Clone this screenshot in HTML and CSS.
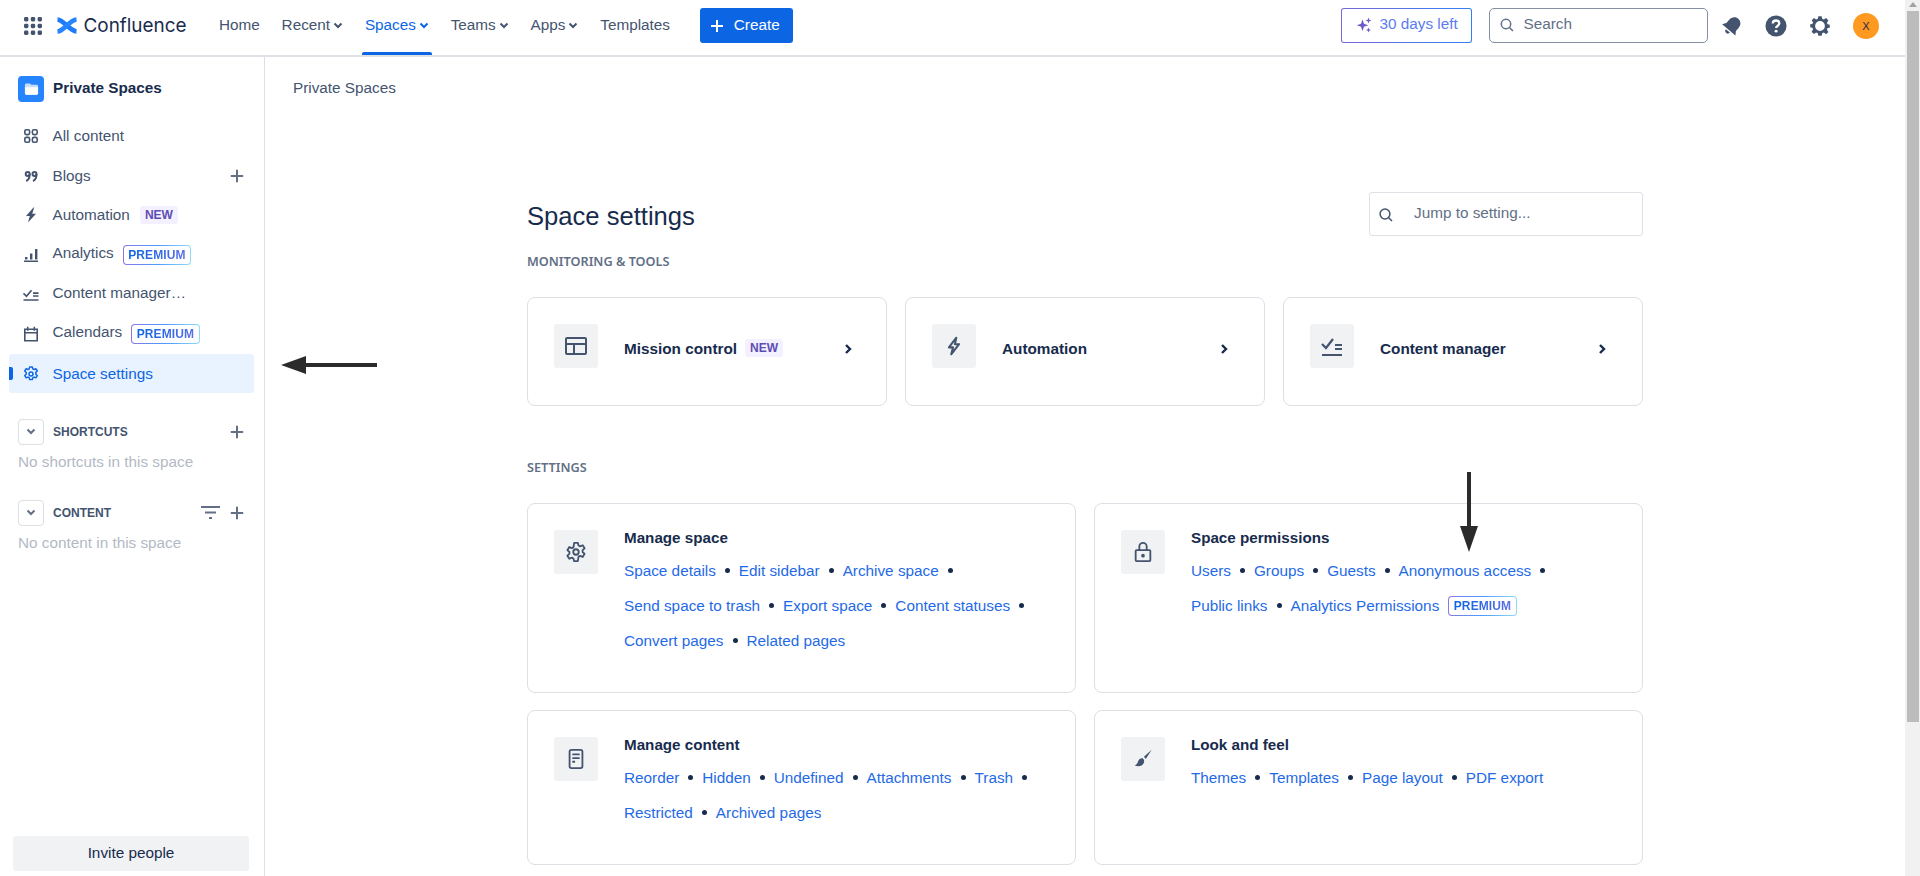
FILE: index.html
```html
<!DOCTYPE html>
<html lang="en">
<head>
<meta charset="utf-8">
<title>Space settings - Confluence</title>
<link rel="stylesheet" href="styles.css">
</head>
<body>
<div class="window">
  <div class="page">
    <header class="topbar">
      <div class="top-left">
        <svg class="apps" viewBox="0 0 18 18"><g fill="#44546f"><rect x="0" y="0" width="4.4" height="4.4" rx="1.4"/><rect x="6.8" y="0" width="4.4" height="4.4" rx="1.4"/><rect x="13.6" y="0" width="4.4" height="4.4" rx="1.4"/><rect x="0" y="6.8" width="4.4" height="4.4" rx="1.4"/><rect x="6.8" y="6.8" width="4.4" height="4.4" rx="1.4"/><rect x="13.6" y="6.8" width="4.4" height="4.4" rx="1.4"/><rect x="0" y="13.6" width="4.4" height="4.4" rx="1.4"/><rect x="6.8" y="13.6" width="4.4" height="4.4" rx="1.4"/><rect x="13.6" y="13.6" width="4.4" height="4.4" rx="1.4"/></g></svg>
        <div class="brand">
          <svg class="brand-mark" viewBox="0 0 20 17"><g fill="none" stroke-width="4.700"><path stroke="#1d7afc" d="M.5 2.500C7 3 12.500 14 19.500 14.500"/><path stroke="#2684ff" d="M19.500 2.500C12.500 3 7 14 .5 14.500"/></g></svg>
          <span class="brand-name">Confluence</span>
        </div>
        <nav class="topnav">
          <a class="topnav-item">Home</a>
          <a class="topnav-item">Recent<svg class="caret" viewBox="0 0 10 7"><path d="M1.500 1.500 5 5l3.500-3.500"/></svg></a>
          <a class="topnav-item is-current">Spaces<svg class="caret" viewBox="0 0 10 7"><path d="M1.500 1.500 5 5l3.500-3.500"/></svg></a>
          <a class="topnav-item">Teams<svg class="caret" viewBox="0 0 10 7"><path d="M1.500 1.500 5 5l3.500-3.500"/></svg></a>
          <a class="topnav-item">Apps<svg class="caret" viewBox="0 0 10 7"><path d="M1.500 1.500 5 5l3.500-3.500"/></svg></a>
          <a class="topnav-item">Templates</a>
        </nav>
        <button class="create"><svg class="create-plus" viewBox="0 0 14 14"><path d="M7 1v12M1 7h12"/></svg>Create</button>
      </div>
      <div class="top-right">
        <button class="trial"><svg class="trial-icon" viewBox="0 0 16 16"><path fill="#6e5dc6" d="M6.500 2.500 8 6.700l4.200 1.500L8 9.700l-1.500 4.200L5 9.700.800 8.200 5 6.700z"/><path fill="#6e5dc6" d="M12.500.500l.8 2.200 2.200.8-2.200.8-.8 2.200-.8-2.200-2.200-.8 2.200-.8zM12.500 10.500l.7 1.800 1.800.7-1.800.7-.7 1.800-.7-1.800-1.800-.7 1.800-.7z"/></svg><span class="trial-text">30 days left</span></button>
        <div class="search"><svg class="search-icon" viewBox="0 0 14 14"><circle cx="6" cy="6" r="4.700"/><path d="m9.500 9.500 3.500 3.500"/></svg><span>Search</span></div>
        <svg class="top-icon" viewBox="0 0 24 24"><g fill="#44546f" transform="rotate(40 12 12)"><path d="M12 1.500c-4.200 0-6.800 3.200-6.800 7.500v4.500L2.500 17.500h19l-2.700-4V9c0-4.300-2.600-7.500-6.800-7.500z"/><path d="M9.200 19h5.600a2.800 2.800 0 0 1-5.600 0z"/></g></svg>
        <svg class="top-icon" viewBox="0 0 24 24"><circle cx="12" cy="12" r="11.500" fill="#44546f"/><path d="M8.500 9.300c0-2 1.600-3.300 3.600-3.300s3.500 1.300 3.500 3.100c0 2.700-3.500 2.700-3.500 5.100" fill="none" stroke="#fff" stroke-width="2.500"/><circle cx="12.100" cy="17.600" r="1.600" fill="#fff"/></svg>
        <svg class="top-icon" viewBox="-1.500 -1.500 27 27"><path fill="#44546f" fill-rule="evenodd" d="M10 0h4l.7 3.200 2 .8L19.500 2.300l2.800 2.800L20.500 8l.8 2L24 10.500v3.500l-2.700.6-.8 2 1.800 2.800-2.800 2.800L16.700 20l-2 .8L14 24h-4l-.7-3.200-2-.8-2.800 1.800-2.800-2.800L3.500 16l-.8-2L0 13.500V10l2.700-.6.8-2L1.700 5.100l2.800-2.800L7.300 4l2-.8zM12 6a6 6 0 1 0 0 12 6 6 0 0 0 0-12z"/></svg>
        <div class="avatar">X</div>
      </div>
    </header>
    <div class="body-row">
      <aside class="sidebar">
        <div class="side-main">
          <div class="space-head">
            <span class="space-logo"><svg viewBox="0 0 16 14"><path fill="#c9dcf8" d="M1 2.500C1 1.700 1.700 1 2.500 1h3.700l1.500 1.500h5.800c.8 0 1.500.7 1.500 1.500v7.500c0 .8-.7 1.500-1.500 1.500h-11C1.700 13 1 12.300 1 11.500z"/><path fill="#fff" d="M1 5h14v6.500c0 .8-.7 1.500-1.500 1.500h-11C1.700 13 1 12.300 1 11.500z"/></svg></span>
            <span class="space-name">Private Spaces</span>
          </div>
          <ul class="side-list">
            <li class="side-item"><svg class="side-icon" viewBox="0 0 16 16"><g fill="none" stroke="#44546f" stroke-width="1.600"><rect x="1.800" y="1.800" width="4.800" height="4.800" rx="1.500"/><rect x="9.400" y="1.800" width="4.800" height="4.800" rx="1.500"/><rect x="1.800" y="9.400" width="4.800" height="4.800" rx="1.500"/><rect x="9.400" y="9.400" width="4.800" height="4.800" rx="1.500"/></g></svg><span class="side-label">All content</span></li>
            <li class="side-item"><svg class="side-icon" viewBox="0 0 16 16"><g fill="none" stroke="#44546f" stroke-width="2"><circle cx="4.700" cy="6" r="2"/><path d="M6.700 6c0 3.500-1 6-3.500 7"/><circle cx="11.500" cy="6" r="2"/><path d="M13.500 6c0 3.500-1 6-3.500 7"/></g></svg><span class="side-label">Blogs</span><svg class="plus" viewBox="0 0 14 14"><path d="M7 .8v12.400M.8 7h12.400"/></svg></li>
            <li class="side-item has-new"><svg class="side-icon" viewBox="0 0 16 16"><path fill="#44546f" d="M10.500 .500 3 9h3.800l-1.800 6.500L13 6.700H9.200l2-6.200z"/></svg><span class="side-label">Automation</span><span class="tag-new">NEW</span></li>
            <li class="side-item has-premium"><svg class="side-icon" viewBox="0 0 16 16"><path fill="#44546f" d="M1 13.500h14V15H1zM2 10h2.400v2.500H2zM7 6.500h2.400v6H7zM12 2h2.400v10.500H12z"/></svg><span class="side-label">Analytics</span><span class="tag-premium"><span>PREMIUM</span></span></li>
            <li class="side-item is-raised"><svg class="side-icon" viewBox="0 0 16 16"><path fill="none" stroke="#44546f" stroke-width="1.700" d="M.500 7.300l3 3 5-6M10 7.200h5.500M10 10h5.500M.500 14h15"/></svg><span class="side-label">Content manager…</span></li>
            <li class="side-item has-premium"><svg class="side-icon" viewBox="0 0 16 16"><path fill="none" stroke="#44546f" stroke-width="1.600" d="M1.800 3.200h12.400v11.600H1.800zM1.800 6.800h12.400M4.700 .8v4M11.300 .8v4"/></svg><span class="side-label">Calendars</span><span class="tag-premium"><span>PREMIUM</span></span></li>
            <li class="side-item is-active"><svg class="side-icon" viewBox="0 0 24 24"><path fill="none" stroke="#0c66e4" stroke-width="2.200" stroke-linejoin="round" d="M10 1.500h4l.8 2.900 1.800.9 2.700-1.200 2.100 3.400-2.200 2v2.900l2.200 2-2.100 3.400-2.700-1.200-1.800.9-.8 2.900h-4l-.8-2.900-1.800-.9-2.700 1.200-2.100-3.400 2.200-2V9.500l-2.200-2 2.100-3.400 2.700 1.200 1.800-.9z"/><circle cx="12" cy="12" r="3" fill="none" stroke="#0c66e4" stroke-width="2.200"/></svg><span class="side-label">Space settings</span></li>
          </ul>
          <section class="side-section sec-shortcuts">
            <div class="sec-head"><span class="sec-toggle"><svg class="caret" viewBox="0 0 10 7"><path d="M1.500 1.500 5 5l3.500-3.500"/></svg></span><span class="sec-title">SHORTCUTS</span><svg class="plus" viewBox="0 0 14 14"><path d="M7 .8v12.400M.8 7h12.400"/></svg></div>
            <p class="sec-empty">No shortcuts in this space</p>
          </section>
          <section class="side-section sec-content">
            <div class="sec-head"><span class="sec-toggle"><svg class="caret" viewBox="0 0 10 7"><path d="M1.500 1.500 5 5l3.500-3.500"/></svg></span><span class="sec-title">CONTENT</span><svg class="filter" viewBox="0 0 19 14"><path d="M0 1h19M4 6.500h11M8 12h3"/></svg><svg class="plus" viewBox="0 0 14 14"><path d="M7 .8v12.400M.8 7h12.400"/></svg></div>
            <p class="sec-empty">No content in this space</p>
          </section>
        </div>
        <button class="invite">Invite people</button>
      </aside>
      <main class="main">
        <div class="breadcrumb">Private Spaces</div>
        <div class="content">
          <div class="title-row">
            <h1 class="title">Space settings</h1>
            <div class="jump"><svg class="jump-icon" viewBox="0 0 14 14"><circle cx="6" cy="6" r="4.900"/><path d="m9.500 9.500 3.500 3.500"/></svg><span>Jump to setting...</span></div>
          </div>
          <h2 class="group-label label-tools">MONITORING &amp; TOOLS</h2>
          <div class="tools">
            <div class="card tool"><span class="tile"><svg viewBox="0 0 24 24"><path fill="none" stroke="#44546f" stroke-width="2" d="M3 4h18a1 1 0 0 1 1 1v14a1 1 0 0 1-1 1H3a1 1 0 0 1-1-1V5a1 1 0 0 1 1-1zM2 10h20M10 10v10"/></svg></span><span class="tool-name">Mission control</span><span class="tag-new">NEW</span><svg class="chev" viewBox="0 0 8 12"><path d="M2 2l4 4-4 4"/></svg></div>
            <div class="card tool"><span class="tile"><svg viewBox="-1 -1 26 26"><path fill="none" stroke="#44546f" stroke-width="2.200" stroke-linejoin="round" d="M14.500 3 6.500 13.500h4.500L9 21l8.500-11H13z"/></svg></span><span class="tool-name">Automation</span><svg class="chev" viewBox="0 0 8 12"><path d="M2 2l4 4-4 4"/></svg></div>
            <div class="card tool"><span class="tile"><svg viewBox="0 0 24 24"><path fill="none" stroke="#44546f" stroke-width="2.200" d="M2 10l4 4 7-9M15 11h7M15 15h7M2 21h20"/></svg></span><span class="tool-name">Content manager</span><svg class="chev" viewBox="0 0 8 12"><path d="M2 2l4 4-4 4"/></svg></div>
          </div>
          <h2 class="group-label label-settings">SETTINGS</h2>
          <div class="settings">
            <div class="card setting">
              <span class="tile"><svg viewBox="0 0 24 24"><path fill="none" stroke="#44546f" stroke-width="2" stroke-linejoin="round" d="M10 2h4l.8 2.900 1.800.9 2.700-1.200 2.100 3.400-2.200 2v2l2.200 2-2.100 3.400-2.700-1.200-1.800.9L14 22h-4l-.8-2.900-1.800-.9-2.700 1.200-2.100-3.400 2.200-2v-2l-2.200-2 2.100-3.400 2.700 1.200 1.800-.9z"/><circle cx="12" cy="12" r="3" fill="none" stroke="#44546f" stroke-width="2"/></svg></span>
              <div class="setting-body">
                <h3 class="setting-name">Manage space</h3>
                <p class="links"><a>Space details</a><i></i><a>Edit sidebar</a><i></i><a>Archive space</a><i></i><br><a>Send space to trash</a><i></i><a>Export space</a><i></i><a>Content statuses</a><i></i><br><a>Convert pages</a><i></i><a>Related pages</a></p>
              </div>
            </div>
            <div class="card setting">
              <span class="tile"><svg viewBox="0 0 24 24"><path fill="none" stroke="#44546f" stroke-width="2" d="M5 10h14a1 1 0 0 1 1 1v10a1 1 0 0 1-1 1H5a1 1 0 0 1-1-1V11a1 1 0 0 1 1-1zM8 10V6a4 4 0 0 1 8 0v4"/><circle cx="12" cy="16" r="2" fill="#44546f"/></svg></span>
              <div class="setting-body">
                <h3 class="setting-name">Space permissions</h3>
                <p class="links"><a>Users</a><i></i><a>Groups</a><i></i><a>Guests</a><i></i><a>Anonymous access</a><i></i><br><a>Public links</a><i></i><a>Analytics Permissions</a><span class="tag-premium"><span>PREMIUM</span></span></p>
              </div>
            </div>
            <div class="card setting">
              <span class="tile"><svg viewBox="0 0 24 24"><path fill="none" stroke="#44546f" stroke-width="2" d="M7 2h10a2 2 0 0 1 2 2v16a2 2 0 0 1-2 2H7a2 2 0 0 1-2-2V4a2 2 0 0 1 2-2zM8 7h8M8 11h8M8 15h3"/></svg></span>
              <div class="setting-body">
                <h3 class="setting-name">Manage content</h3>
                <p class="links"><a>Reorder</a><i></i><a>Hidden</a><i></i><a>Undefined</a><i></i><a>Attachments</a><i></i><a>Trash</a><i></i><br><a>Restricted</a><i></i><a>Archived pages</a></p>
              </div>
            </div>
            <div class="card setting">
              <span class="tile"><svg viewBox="0 0 24 24"><path fill="#44546f" d="M21.500 2 13 9.500l2 2.500zM11.500 11c-2.500.4-4.300 1.500-5 4-.5 1.800-1.500 3-3.500 4 3.500 1.500 8.500 1 10-3 .4-1.300.3-2.500-.2-3.500z"/></svg></span>
              <div class="setting-body">
                <h3 class="setting-name">Look and feel</h3>
                <p class="links"><a>Themes</a><i></i><a>Templates</a><i></i><a>Page layout</a><i></i><a>PDF export</a></p>
              </div>
            </div>
          </div>
        </div>
      </main>
    </div>
    <svg class="arrow arrow-left" viewBox="0 0 96 18"><path fill="#2b2b2b" d="M0 9 25 0v7h71v4H25v7z"/></svg>
    <svg class="arrow arrow-down" viewBox="0 0 18 80"><path fill="#2b2b2b" d="M7 0h4v54h7L9 80 0 54h7z"/></svg>
  </div>
  <div class="scrollbar">
    <span class="scroll-btn"></span>
    <span class="scroll-thumb"></span>
  </div>
</div>
</body>
</html>
```

FILE: styles.css
```css
* { box-sizing: border-box; }
html, body { margin: 0; height: 100%; overflow: hidden; }
body { font-family: "Liberation Sans", Arial, sans-serif; font-size: 15.300px; color: #172b4d; background: #fff; }
ul { list-style: none; margin: 0; padding: 0; }
h1, h2, h3, p { margin: 0; }
button { font-family: inherit; }

.window { display: flex; height: 876px; }
.page { position: relative; flex: 1; min-width: 0; display: flex; flex-direction: column; overflow: hidden; }

.scrollbar { width: 15px; flex: none; display: flex; flex-direction: column; background: #f1f1f1; }
.scroll-btn { height: 11px; flex: none; position: relative; }
.scroll-btn::after { content: ""; position: absolute; left: 4px; top: 2px; border: 4px solid transparent; border-top: 0; border-bottom: 5px solid #a3a3a3; }
.scroll-thumb { height: 711px; width: 12px; margin-left: 2px; flex: none; background: #bcbcbc; }

.topbar { height: 57px; flex: none; display: flex; justify-content: space-between; align-items: center; border-bottom: 2px solid #dfe1e6; padding: 0 25px 4px 24px; }
.top-left, .top-right { display: flex; align-items: center; }
.apps { width: 18px; height: 18px; }
.brand { display: flex; align-items: center; margin-left: 15px; width: 162px; }
.brand-mark { width: 20px; height: 17px; }
.brand-name { margin-left: 6.500px; font-family: Inter, "Liberation Sans", sans-serif; font-size: 18.900px; color: #172b4d; }
.topnav { display: flex; align-items: center; }
.topnav-item { position: relative; display: flex; align-items: center; height: 35px; padding-bottom: 2px; margin-right: 21.800px; color: #44546f; }
.topnav-item.is-current { color: #0c66e4; }
.topnav-item.is-current::after { content: ""; position: absolute; left: -3px; right: -3px; bottom: -12px; height: 3px; background: #0c66e4; border-radius: 2px 2px 0 0; }
.caret { width: 10px; height: 7px; margin: 2px 0 0 3px; fill: none; stroke: currentColor; stroke-width: 2; }
.create { display: flex; align-items: center; gap: 10px; width: 93px; height: 35px; margin-left: 8px; padding: 0 0 1px 10px; border: 0; border-radius: 3px; background: #0c66e4; color: #fff; font-size: 15.300px; }
.create-plus { width: 14px; height: 14px; margin-top: 1px; fill: none; stroke: #fff; stroke-width: 2; }

.trial { display: flex; align-items: center; width: 131px; height: 35px; padding: 0 0 3px 14px; border: 1px solid transparent; border-radius: 3px; background: linear-gradient(#fff, #fff) padding-box, linear-gradient(90deg, #7a68d8, #2f80f5) border-box; font-size: 15.300px; }
.trial-icon { width: 16px; height: 16px; margin-top: 2px; }
.trial-text { margin-left: 8px; color: #5b7cf0; }
.search { display: flex; align-items: center; gap: 10px; width: 219px; height: 35px; margin: 0 13.500px 0 17px; padding: 0 0 3px 10px; border: 1px solid #8590a2; border-radius: 5px; color: #626f86; }
.search-icon { width: 14px; height: 14px; margin-top: 1px; fill: none; stroke: #626f86; stroke-width: 1.500; }
.top-icon { width: 22px; height: 22px; margin-right: 22px; flex: none; }
.avatar { width: 26px; height: 26px; border-radius: 50%; background: #ff991f; color: #172b4d; font-size: 11px; display: flex; align-items: center; justify-content: center; margin-right: 1px; }

.body-row { flex: 1; display: flex; min-height: 0; }
.sidebar { width: 265px; flex: none; display: flex; flex-direction: column; justify-content: space-between; border-right: 1px solid #dcdfe4; padding-bottom: 5px; }
.side-main { display: flex; flex-direction: column; }
.space-head { display: flex; align-items: center; gap: 9px; padding: 19px 0 0 18px; }
.space-logo { width: 26px; height: 26px; border-radius: 4px; background: #2684ff; display: flex; align-items: center; justify-content: center; }
.space-logo svg { width: 15px; height: 14px; }
.space-name { margin-bottom: 2px; font-weight: 700; color: #172b4d; }
.side-list { margin-top: 14.200px; }
.side-item { position: relative; display: flex; align-items: center; height: 39.600px; margin-left: 9px; width: 245px; padding-left: 14px; color: #44546f; }
.side-icon { width: 16px; height: 16px; flex: none; margin-right: 13.500px; }
.side-item .plus { position: absolute; right: 10px; }
.side-label { white-space: nowrap; }
.has-new .side-label { margin-bottom: 1px; }
.is-raised .side-label { margin-bottom: 3px; }
.has-premium .side-label { margin-bottom: 4px; }
.is-active { background: #e9f2ff; color: #0c66e4; border-radius: 3px; }
.is-active::before { content: ""; position: absolute; left: 0; top: 13px; width: 4px; height: 13px; background: #0c66e4; border-radius: 0 2px 2px 0; }
.plus { width: 14px; height: 14px; flex: none; fill: none; stroke: #626f86; stroke-width: 2; }

.tag-new { display: inline-flex; align-items: center; height: 18px; margin-left: 10px; padding: 0 5px; background: #f3f0ff; color: #5e4db2; border-radius: 3px; font-size: 12px; font-weight: 700; }
.tag-premium { display: inline-flex; align-items: center; height: 20px; margin-left: 8.800px; padding: 0 4.700px; border: 1px solid transparent; border-radius: 4px; background: linear-gradient(#fff, #fff) padding-box, linear-gradient(90deg, #8a78e2, #4c9aff, #8fdcf5) border-box; font-size: 12px; font-weight: 700; letter-spacing: .1px; }
.tag-premium span { background: linear-gradient(90deg, #0c66e4, #5a6ee6); -webkit-background-clip: text; background-clip: text; color: transparent; }

.side-section { padding: 0 0 0 18px; }
.sec-shortcuts { margin-top: 25.600px; }
.sec-content { margin-top: 29px; }
.sec-head { display: flex; align-items: center; height: 26px; padding-right: 20px; }
.sec-toggle { width: 26px; height: 26px; border: 1px solid #dcdfe4; border-radius: 4px; display: flex; align-items: center; justify-content: center; color: #626f86; flex: none; }
.sec-toggle .caret { margin: 0; }
.sec-title { margin-left: 9px; margin-right: auto; padding-top: 1px; font-size: 12px; font-weight: 700; color: #44546f; }
.filter { width: 19px; height: 14px; margin-right: 10px; fill: none; stroke: #626f86; stroke-width: 2; }
.sec-empty { margin-top: 8px; color: #b3b9c4; line-height: 18px; }

.invite { align-self: flex-start; margin-left: 13px; width: 236px; height: 35px; padding-bottom: 2px; border: 0; border-radius: 3px; background: #f1f2f4; color: #172b4d; font-size: 15.300px; }

.main { flex: 1; min-width: 0; padding: 0 0 0 28px; }
.breadcrumb { margin-top: 22px; height: 18px; line-height: 18px; color: #44546f; }
.content { width: 1116px; margin: 0 0 0 234px; }
.title-row { display: flex; justify-content: space-between; align-items: flex-start; margin-top: 95px; height: 44px; }
.title { margin-top: 8px; font-size: 25.600px; line-height: 32px; font-weight: 400; color: #172b4d; }
.jump { display: flex; align-items: center; gap: 21px; width: 274px; height: 44px; padding: 0 0 3px 9px; border: 1px solid #dfe1e6; border-radius: 3px; color: #626f86; }
.jump-icon { width: 14px; height: 14px; margin-top: 4px; fill: none; stroke: #44546f; stroke-width: 1.500; }
.group-label { font-family: "Noto Sans", "Liberation Sans", sans-serif; font-size: 12.700px; line-height: 16px; font-weight: 600; color: #626f86; }
.label-tools { margin-top: 17px; }
.label-settings { margin-top: 53px; }

.card { background: #fff; border: 1px solid #dcdfe4; border-radius: 8px; }
.tools { display: grid; grid-template-columns: 360px 360px 360px; justify-content: space-between; margin-top: 28px; }
.tool { position: relative; display: flex; align-items: center; height: 109px; padding: 26px 0 37px 26px; }
.tile { width: 44px; height: 44px; flex: none; background: #f1f2f4; border-radius: 3px; display: flex; align-items: center; justify-content: center; }
.tile svg { width: 22px; height: 22px; }
.tool .tile svg { width: 24px; height: 24px; }
.tool-name { margin: 5px 0 0 26px; font-weight: 700; color: #172b4d; }
.tool .tag-new { margin: 4px 0 0 8px; }
.chev { position: absolute; right: 34px; top: 45px; width: 8px; height: 12px; fill: none; stroke: #172b4d; stroke-width: 2.400; }
.tool + .tool .chev { right: 36px; }

.settings { display: grid; grid-template-columns: 1fr 1fr; grid-template-rows: 190px 155px; gap: 17px 18px; margin-top: 28px; }
.setting { display: flex; padding: 26px 0 0 26px; }
.setting-body { margin-left: 26px; margin-top: -1px; }
.setting-name { font-size: 15.200px; line-height: 18px; font-weight: 700; color: #172b4d; }
.links { margin-top: 6px; line-height: 35px; color: #1f6ae6; white-space: nowrap; }
.links i { display: inline-block; width: 5px; height: 5px; margin: 0 9px 3px; border-radius: 50%; background: #172b4d; vertical-align: middle; }
.links .tag-premium { vertical-align: 1px; line-height: 18px; }

.arrow { position: absolute; }
.arrow-left { left: 281px; top: 356px; width: 96px; height: 18px; }
.arrow-down { left: 1460px; top: 472px; width: 18px; height: 80px; }
```
